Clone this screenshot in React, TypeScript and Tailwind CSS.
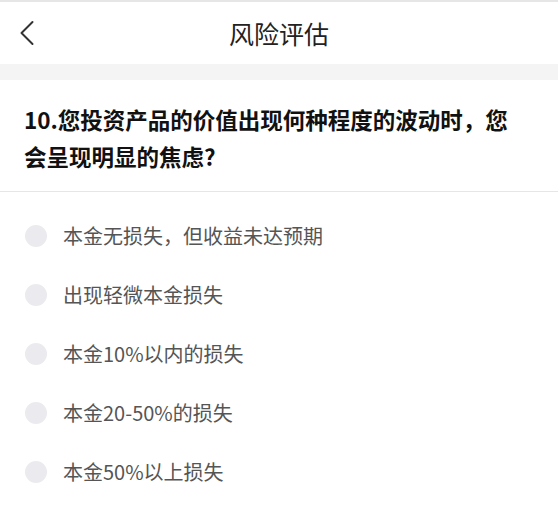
export default function App() {
  const options = [
    "本金无损失，但收益未达预期",
    "出现轻微本金损失",
    "本金10%以内的损失",
    "本金20-50%的损失",
    "本金50%以上损失",
  ];
  return (
    <div
      className="w-[558px] h-[505px] bg-white overflow-hidden"
      style={{ fontFamily: '"Noto Sans CJK SC", "Noto Sans", sans-serif' }}
    >
      <div className="h-[2px] bg-[#e6e6e6]" />
      <div className="relative h-[62px] flex items-center justify-center">
        <svg
          className="absolute left-[19px] top-[18px]"
          width="16"
          height="26"
          viewBox="0 0 16 26"
        >
          <polyline
            points="13.5,2 2.5,13 13.5,24"
            fill="none"
            stroke="#333"
            strokeWidth="2"
            strokeLinecap="round"
            strokeLinejoin="round"
          />
        </svg>
        <span className="text-[25px] leading-none text-[#222]">风险评估</span>
      </div>
      <div className="h-[16px] bg-[#f4f4f4]" />
      <div className="pt-[21px] pb-[16px] pl-[24px] pr-[20px]">
        <p className="text-[22.5px] leading-[37px] font-bold text-[#111]">
          10.您投资产品的价值出现何种程度的波动时，您
          <br />
          会呈现明显的焦虑?
        </p>
      </div>
      <div className="h-px bg-[#e6e6e6]" />
      <div className="pt-[14px]">
        {options.map((o) => (
          <div key={o} className="h-[59px] flex items-center pl-[25px] gap-[16px]">
            <div className="w-[22px] h-[22px] rounded-full bg-[#ebebef]" />
            <span className="text-[20px] leading-none text-[#555]">{o}</span>
          </div>
        ))}
      </div>
    </div>
  );
}
